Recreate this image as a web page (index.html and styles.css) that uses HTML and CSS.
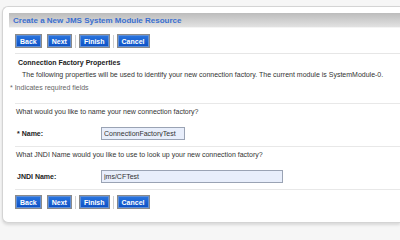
FILE: index.html
```html
<!doctype html>
<html>
<head>
    <meta charset="UTF-8">
    <title>Create a New JMS System Module Resource</title>
    <link rel="stylesheet" href="styles.css">
</head>
<body>
    <div class="panel">
        <h1 class="titlebar">Create a New JMS System Module Resource</h1>
        <div class="buttons">
            <button>Back</button>
            <button>Next</button>
            <span class="sep"></span>
            <button>Finish</button>
            <span class="sep"></span>
            <button>Cancel</button>
        </div>
        <div class="section intro">
            <h2>Connection Factory Properties</h2>
            <p class="desc">The following properties will be used to identify your new connection factory. The current module is SystemModule-0.</p>
            <p class="required">* Indicates required fields</p>
        </div>
        <div class="section field">
            <p class="question">What would you like to name your new connection factory?</p>
            <div class="row">
                <label><span class="star">*</span> Name:</label>
                <input type="text" class="short" value="ConnectionFactoryTest">
            </div>
        </div>
        <div class="section field">
            <p class="question">What JNDI Name would you like to use to look up your new connection factory?</p>
            <div class="row">
                <label>JNDI Name:</label>
                <input type="text" class="long" value="jms/CFTest">
            </div>
        </div>
        <div class="buttons bottom">
            <button>Back</button>
            <button>Next</button>
            <span class="sep"></span>
            <button>Finish</button>
            <span class="sep"></span>
            <button>Cancel</button>
        </div>
    </div>
</body>
</html>
```

FILE: styles.css
```css
* {
    box-sizing: border-box;
}
body {
    margin: 0;
    width: 400px;
    height: 240px;
    overflow: hidden;
    background-color: #f6f6f6;
    font-family: "Liberation Sans", Arial, sans-serif;
    font-size: 7px;
    color: #333;
}
.panel {
    margin: 6px 0 0 2px;
    width: 398px;
    height: 217px;
    padding: 6px 0 0 6px;
    background-color: #fff;
    border: solid 1px #d4d4d4;
    border-right: none;
    border-radius: 6px 0 0 6px;
    box-shadow: 0 2px 3px rgba(0, 0, 0, 0.12);
}
.titlebar {
    margin: 0;
    height: 15px;
    padding-left: 4px;
    line-height: 15px;
    font-size: 8px;
    font-weight: bold;
    color: #3a6fd0;
    background: linear-gradient(#bcbcbc, #e2e2e2);
    border-bottom: solid 1px #f4f4f4;
}

/** Barre de boutons */
.buttons {
    display: flex;
    align-items: center;
    gap: 5px;
    margin: 6px 0 0 6px;
    padding-bottom: 5px;
    border-bottom: solid 1px #e6e6e6;
}
.buttons button {
    height: 14px;
    padding: 0 4px;
    font-family: inherit;
    font-size: 7px;
    font-weight: bold;
    color: #fff;
    background: linear-gradient(#2a76e0, #0b4fc4);
    border: solid 1px #8a8a8a;
    box-shadow: inset 0 0 0 1px #5f8fd8;
    border-radius: 0;
}
.buttons .sep {
    width: 1px;
    height: 13px;
    margin: 0 -2px;
    background-color: #cfcfcf;
}
.buttons.bottom {
    margin-top: 5px;
    border-bottom: none;
}

.section {
    margin-left: 6px;
    border-bottom: solid 1px #e8e8e8;
}
.section p {
    margin: 0;
}
.intro {
    height: 50px;
    padding-top: 5px;
}
.intro h2 {
    margin: 0 0 0 3px;
    font-size: 7px;
    font-weight: bold;
    color: #222;
}
.intro .desc {
    margin: 5px 0 0 7px;
}
.intro .required {
    margin: 6px 0 0 -5px;
    color: #666;
}
.field {
    height: 43px;
    padding-top: 4px;
}
.field .question {
    margin-left: 1px;
}
.row {
    display: flex;
    align-items: center;
    margin-top: 12px;
}
.row label {
    width: 86px;
    padding-left: 2px;
    font-weight: bold;
    color: #222;
}
.row input {
    height: 13px;
    padding: 0 2px;
    font-family: inherit;
    font-size: 7px;
    color: #333;
    background-color: #e8eefb;
    border: solid 1px #9aa3b4;
    border-radius: 0;
}
.row input.short {
    width: 84px;
}
.row input.long {
    width: 182px;
}
```
